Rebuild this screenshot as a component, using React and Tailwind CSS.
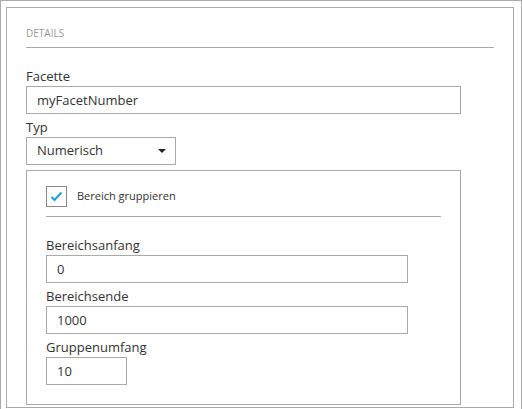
import React, { useState } from 'react';

// Simple labelled text field used throughout the details form
const Field = ({ label, value, width, className = '' }) => (
  <div className={className}>
    <label className="block text-[13px] leading-[19px] text-[#333]">{label}</label>
    <input
      type="text"
      defaultValue={value}
      className={`${width} h-[28px] border border-[#aaa] bg-white px-[10px] text-[13px] text-[#333] outline-none`}
    />
  </div>
);

export default function App() {
  const [grouped, setGrouped] = useState(true);

  return (
    // Outer frame
    <div
      className="w-[522px] h-[409px] overflow-hidden border-l border-t border-r border-[#aaa] bg-white pl-[5px] pr-[7px] pt-[6px]"
      style={{ fontFamily: '"Open Sans", "Liberation Sans", sans-serif' }}
    >
      {/* Details panel */}
      <div className="h-[401px] border border-[#aaa] px-[19px] pt-[18px]">
        {/* Section header */}
        <div className="border-b border-[#aaa] pb-[7px] text-[10px] leading-[14px] uppercase text-[#999]">
          Details
        </div>

        <Field label="Facette" value="myFacetNumber" width="w-[435px]" className="mt-[19px]" />

        {/* Type select */}
        <div className="mt-[4px]">
          <label className="block text-[13px] leading-[19px] text-[#333]">Typ</label>
          <button
            type="button"
            className="flex h-[28px] w-[150px] items-center justify-between border border-[#aaa] bg-white pl-[10px] pr-[9px] text-[13px] text-[#333]"
          >
            <span>Numerisch</span>
            <svg width="8" height="4" viewBox="0 0 8 4">
              <polygon points="0,0 8,0 4,4" fill="#222" />
            </svg>
          </button>
        </div>

        {/* Range grouping box */}
        <div className="mt-[5px] w-[435px] border border-[#aaa] px-[19px] pt-[15px] pb-[19px]">
          <div className="flex items-center border-b border-[#aaa] pb-[9px]">
            <button
              type="button"
              onClick={() => setGrouped(!grouped)}
              className="flex h-[21px] w-[21px] items-center justify-center border border-[#888] bg-white"
            >
              {grouped && (
                <svg width="13" height="11" viewBox="0 0 13 11">
                  <polyline points="1.5,6 4.5,9 11.5,1.5" fill="none" stroke="#1e9fd6" strokeWidth="2" />
                </svg>
              )}
            </button>
            <span className="ml-[10px] text-[11px] text-[#333]">Bereich gruppieren</span>
          </div>

          <Field label="Bereichsanfang" value="0" width="w-[362px]" className="mt-[19px]" />
          <Field label="Bereichsende" value="1000" width="w-[362px]" className="mt-[4px]" />
          <Field label="Gruppenumfang" value="10" width="w-[81px]" className="mt-[4px]" />
        </div>
      </div>
    </div>
  );
}
